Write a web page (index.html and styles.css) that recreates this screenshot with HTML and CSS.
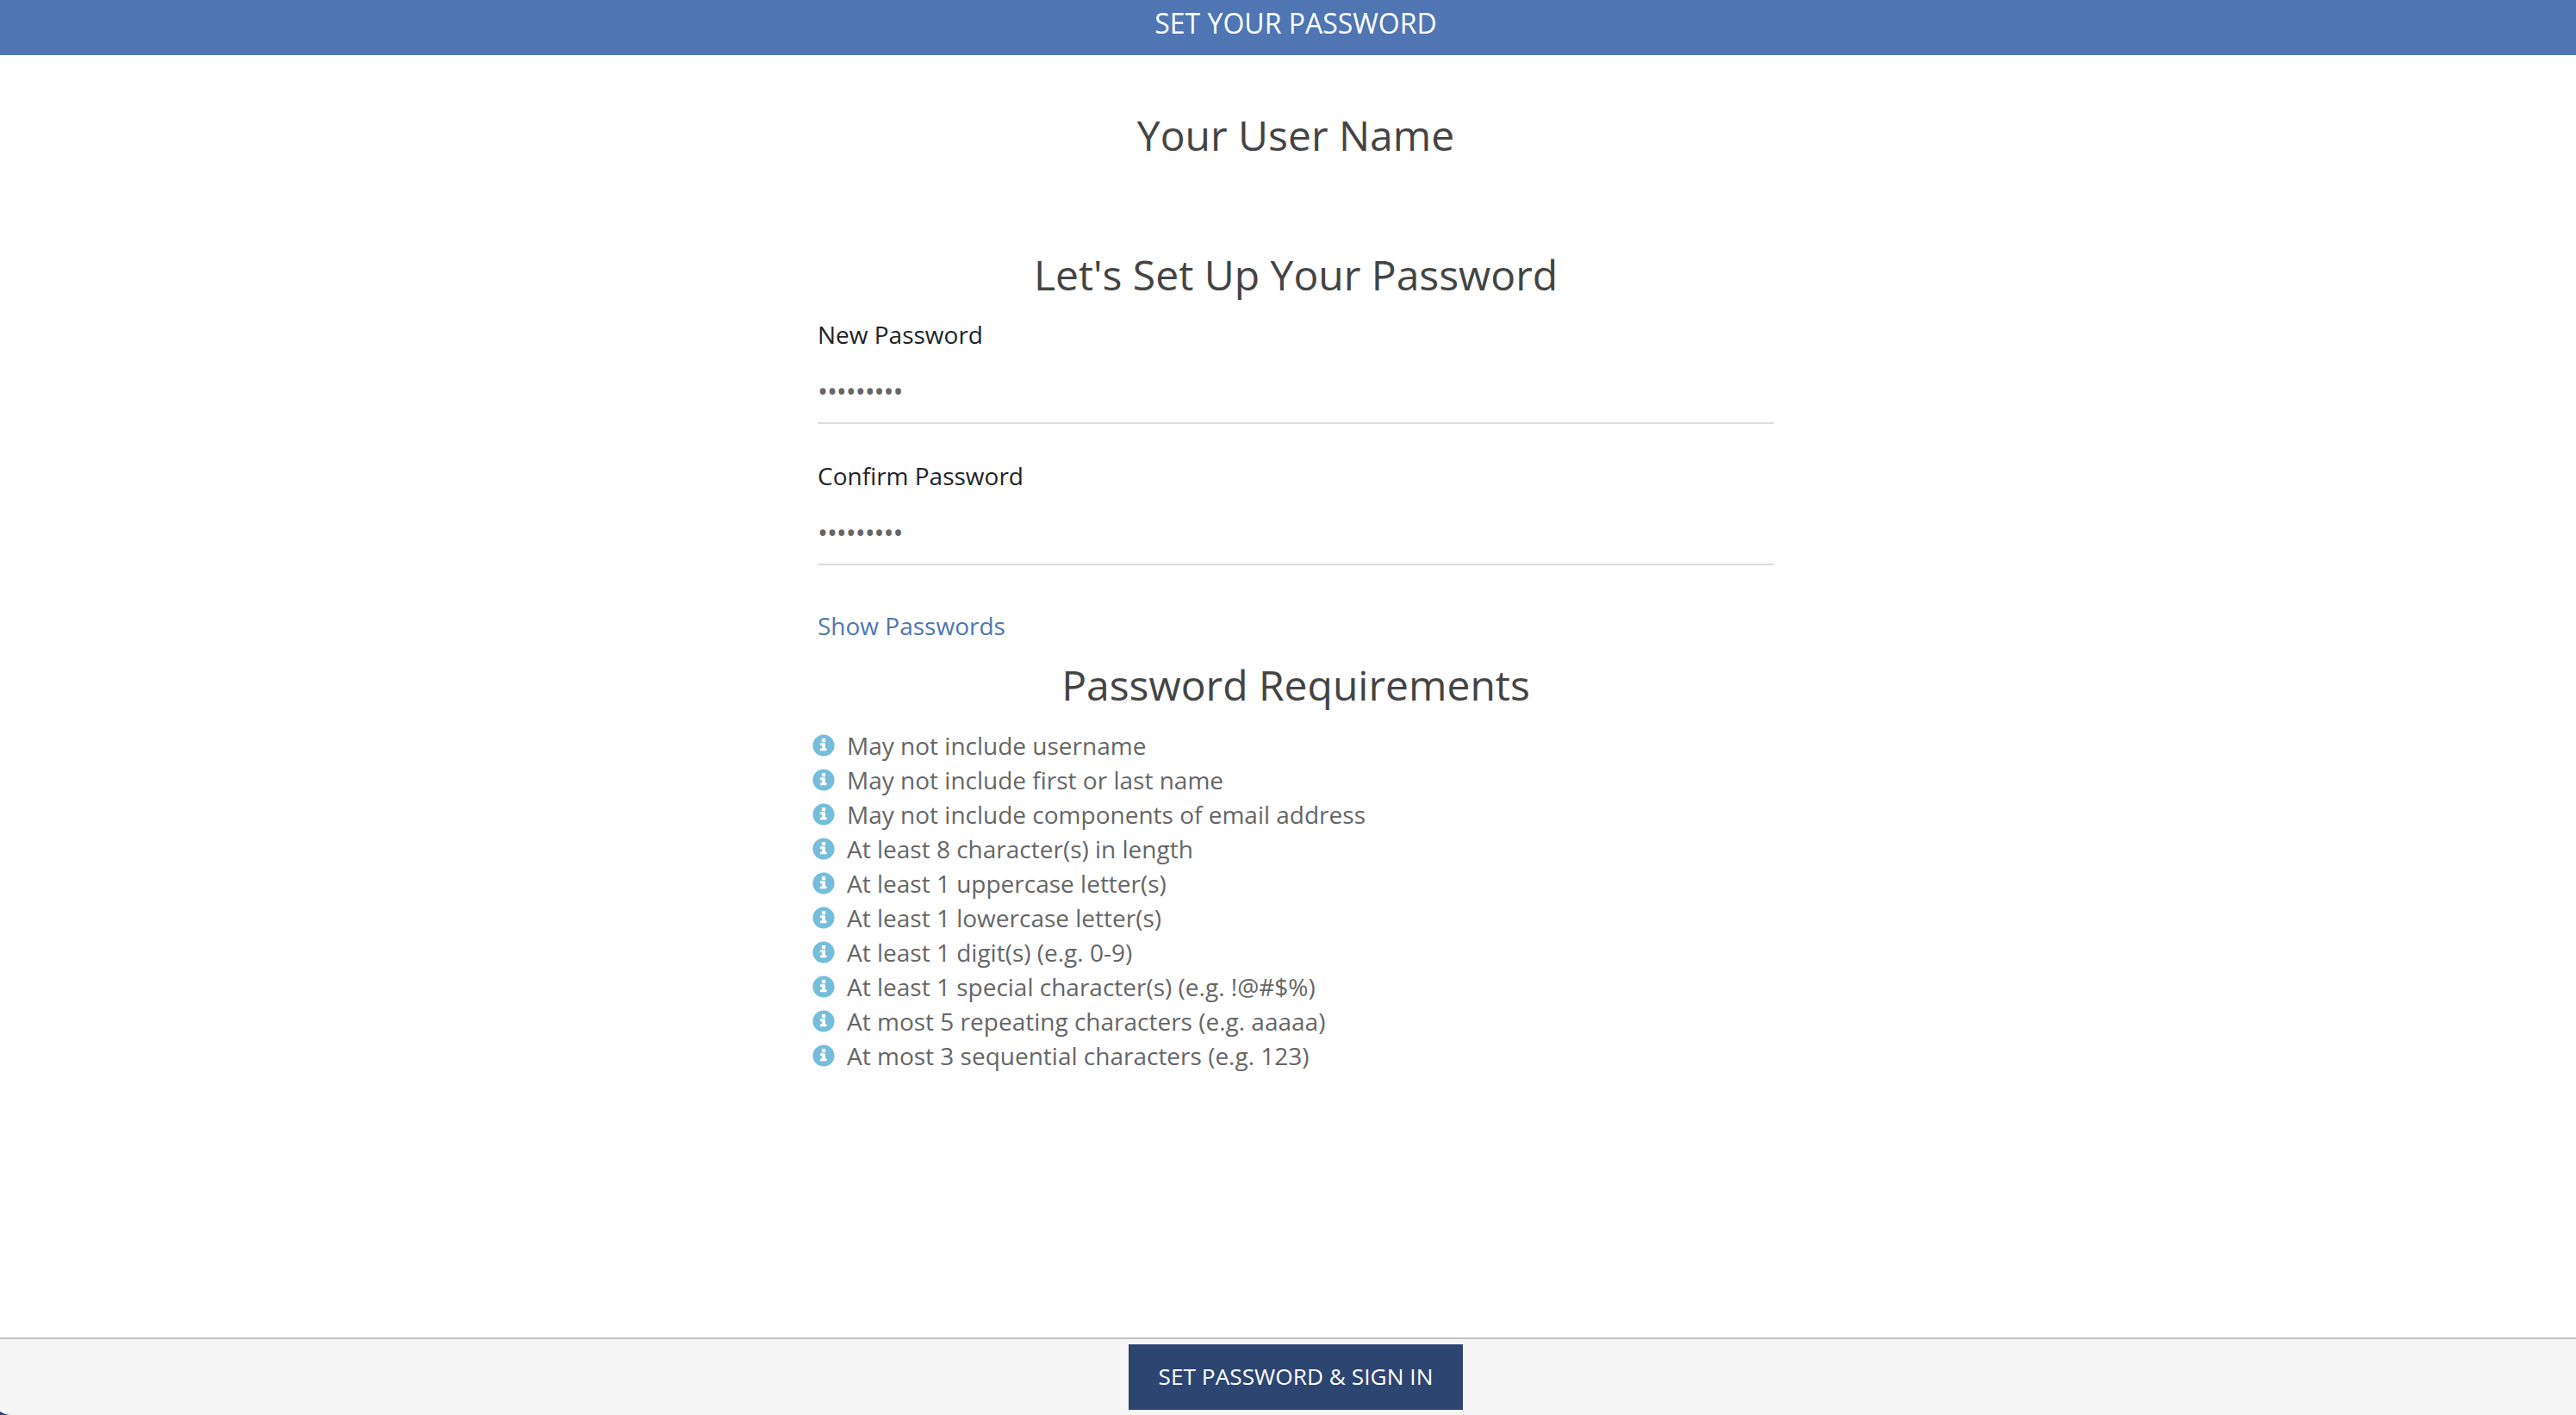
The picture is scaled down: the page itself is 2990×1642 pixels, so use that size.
FILE: index.html
```html
<!DOCTYPE html>
<html lang="en">
<head>
<meta charset="utf-8">
<title>Set Your Password</title>
<link rel="stylesheet" href="styles.css">
</head>
<body>
<svg class="sprite" aria-hidden="true">
  <symbol id="info" viewBox="0 0 512 512">
    <path d="M256 8C119 8 8 119.100 8 256c0 137 111 248 248 248s248-111 248-248C504 119.100 393 8 256 8zm-42 88h84v84h-84zm106 272c0 6.600-5.400 12-12 12H188c-6.600 0-12-5.400-12-12v-32c0-6.600 5.400-12 12-12h28v-64h-28c-6.600 0-12-5.400-12-12v-32c0-6.600 5.400-12 12-12h92c6.600 0 12 5.400 12 12v108h28c6.600 0 12 5.400 12 12z" fill="currentColor"/>
  </symbol>
</svg>
<header class="topbar">Set Your Password</header>
<main class="content">
  <h2 class="heading">Your User Name</h2>
  <h2 class="heading heading-setup">Let's Set Up Your Password</h2>
  <label class="field">
    <span class="field-label">New Password</span>
    <span class="field-value">•••••••••</span>
  </label>
  <label class="field">
    <span class="field-label">Confirm Password</span>
    <span class="field-value">•••••••••</span>
  </label>
  <a class="show-link">Show Passwords</a>
  <h2 class="heading heading-rules">Password Requirements</h2>
  <ul class="rules">
    <li class="rule"><svg class="icon"><use href="#info"/></svg><span>May not include username</span></li>
    <li class="rule"><svg class="icon"><use href="#info"/></svg><span>May not include first or last name</span></li>
    <li class="rule"><svg class="icon"><use href="#info"/></svg><span>May not include components of email address</span></li>
    <li class="rule"><svg class="icon"><use href="#info"/></svg><span>At least 8 character(s) in length</span></li>
    <li class="rule"><svg class="icon"><use href="#info"/></svg><span>At least 1 uppercase letter(s)</span></li>
    <li class="rule"><svg class="icon"><use href="#info"/></svg><span>At least 1 lowercase letter(s)</span></li>
    <li class="rule"><svg class="icon"><use href="#info"/></svg><span>At least 1 digit(s) (e.g. 0-9)</span></li>
    <li class="rule"><svg class="icon"><use href="#info"/></svg><span>At least 1 special character(s) (e.g. !@#$%)</span></li>
    <li class="rule"><svg class="icon"><use href="#info"/></svg><span>At most 5 repeating characters (e.g. aaaaa)</span></li>
    <li class="rule"><svg class="icon"><use href="#info"/></svg><span>At most 3 sequential characters (e.g. 123)</span></li>
  </ul>
</main>
<footer class="footer">
  <button class="submit" type="button">Set Password &amp; Sign In</button>
</footer>
</body>
</html>
```
FILE: styles.css
```css
* {
  box-sizing: border-box;
}

body {
  display: flex;
  flex-direction: column;
  height: 1642px;
  margin: 0;
  overflow: hidden;
  background: #fff;
  color: #666;
  font: 28px/40px "Open Sans", sans-serif;
}

.sprite {
  display: none;
}

.topbar {
  height: 64px;
  padding-left: 18px;
  background: #4f75b3;
  color: #fff;
  font-size: 32px;
  line-height: 53px;
  text-align: center;
  text-transform: uppercase;
}

.content {
  flex: 1;
  display: flex;
  flex-direction: column;
  width: 1110px;
  margin-left: 949px;
  padding-top: 63px;
}

.heading {
  margin: 0;
  color: #444;
  font-size: 48px;
  font-weight: 400;
  line-height: 60px;
  text-align: center;
}

.heading-setup {
  margin-top: 102px;
}

.heading-rules {
  margin-top: 19px;
}

.field {
  display: flex;
  flex-direction: column;
  height: 124px;
  margin-top: 19px;
  border-bottom: 2px solid #dcdcdc;
}

.field + .field {
  margin-top: 40px;
}

.field-label {
  color: #212327;
}

.field-value {
  margin-top: 26px;
  font-size: 32px;
  letter-spacing: -1.1px;
}

.show-link {
  margin-top: 50px;
  color: #4f75b3;
}

.rules {
  margin: 20px 0 0 -6px;
  padding: 0;
  list-style: none;
}

.rule {
  display: flex;
  align-items: center;
  gap: 14px;
  height: 40px;
}

.icon {
  width: 26px;
  height: 26px;
  color: #76bddc;
}

.footer {
  display: flex;
  justify-content: center;
  height: 90px;
  padding: 6px 0 0 18px;
  border-top: 2px solid #c2c2c2;
  background: radial-gradient(circle at 13px 0, #f5f5f6 21.5px, #2d4571 22.5px) left bottom / 13px 22px no-repeat, #f5f5f6;
}

.submit {
  width: 388px;
  height: 76px;
  padding: 0 0 2px;
  border: 0;
  background: #2d4571;
  color: #fff;
  font: 26.2px/74px "Open Sans", sans-serif;
  letter-spacing: 0.05px;
  text-transform: uppercase;
}
```
